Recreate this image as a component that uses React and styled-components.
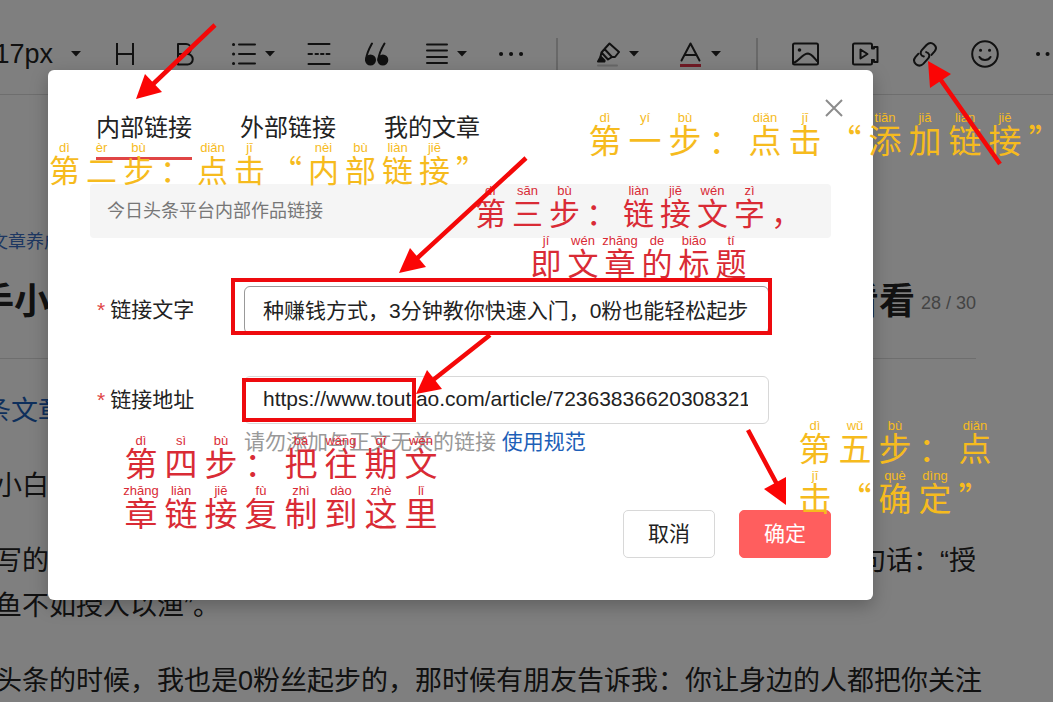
import React, { useState } from 'react';
import styled, { createGlobalStyle } from 'styled-components';

const YELLOW = '#f6bb1e';
const RED = '#d92b35';

const notes = [
  {
    id: 'step1',
    top: 111,
    left: 585,
    color: YELLOW,
    lines: [
      [
        ['第', 'dì'], ['一', 'yí'], ['步', 'bù'], ['：'], ['点', 'diǎn'], ['击', 'jī'],
        ['“'], ['添', 'tiān'], ['加', 'jiā'], ['链', 'liàn'], ['接', 'jiē'], ['”'],
      ],
    ],
  },
  {
    id: 'step2',
    top: 141,
    left: 46,
    color: YELLOW,
    compact: true,
    lines: [
      [
        ['第', 'dì'], ['二', 'èr'], ['步', 'bù'], ['：'], ['点', 'diǎn'], ['击', 'jī'],
        ['“'], ['内', 'nèi'], ['部', 'bù'], ['链', 'liàn'], ['接', 'jiē'], ['”'],
      ],
    ],
  },
  {
    id: 'step3',
    top: 184,
    left: 472,
    color: RED,
    compact: true,
    align: 'center',
    lines: [
      [
        ['第', 'dì'], ['三', 'sān'], ['步', 'bù'], ['：'],
        ['链', 'liàn'], ['接', 'jiē'], ['文', 'wén'], ['字', 'zì'], ['，'],
      ],
      [['即', 'jí'], ['文', 'wén'], ['章', 'zhāng'], ['的', 'de'], ['标', 'biāo'], ['题', 'tí']],
    ],
  },
  {
    id: 'step4',
    top: 434,
    left: 121,
    color: RED,
    lines: [
      [
        ['第', 'dì'], ['四', 'sì'], ['步', 'bù'], ['：'],
        ['把', 'bǎ'], ['往', 'wǎng'], ['期', 'qī'], ['文', 'wén'],
      ],
      [
        ['章', 'zhāng'], ['链', 'liàn'], ['接', 'jiē'], ['复', 'fù'],
        ['制', 'zhì'], ['到', 'dào'], ['这', 'zhè'], ['里', 'lǐ'],
      ],
    ],
  },
  {
    id: 'step5',
    top: 419,
    left: 795,
    color: YELLOW,
    lines: [
      [['第', 'dì'], ['五', 'wǔ'], ['步', 'bù'], ['：'], ['点', 'diǎn']],
      [['击', 'jī'], ['“'], ['确', 'què'], ['定', 'dìng'], ['”']],
    ],
  },
];

const tabs = ['内部链接', '外部链接', '我的文章'];

function Icon({ children, width = 28 }) {
  return (
    <svg
      width={width}
      height="28"
      viewBox={`0 0 ${width} 28`}
      fill="none"
      stroke="currentColor"
      strokeWidth="2"
      strokeLinecap="round"
      strokeLinejoin="round"
      aria-hidden="true"
    >
      {children}
    </svg>
  );
}

function Caret() {
  return (
    <svg width="10" height="6" viewBox="0 0 10 6" aria-hidden="true">
      <path d="M0 0h10L5 5.5z" fill="currentColor" />
    </svg>
  );
}

function Toolbar() {
  return (
    <ToolbarRow>
      <SizeButton type="button">
        17px <Caret />
      </SizeButton>
      <Tool type="button" aria-label="标题">
        <Icon>
          <path d="M6 3v22M22 3v22M6 14h16" strokeLinecap="butt" />
        </Icon>
      </Tool>
      <Tool type="button" aria-label="加粗">
        <Icon>
          <path d="M7 4h8a5 5 0 0 1 0 10H7zM7 14h9.500a5.200 5.200 0 0 1 0 10.500H7z" />
        </Icon>
      </Tool>
      <Tool type="button" aria-label="列表" $width={76}>
        <Icon width={24}>
          <path d="M7 4.500h16M7 14h16M7 23.500h16" />
          <path d="M1.500 4.500h.1M1.500 14h.1M1.500 23.500h.1" strokeWidth="3" />
        </Icon>
        <Caret />
      </Tool>
      <Tool type="button" aria-label="分割线" $width={56}>
        <Icon>
          <path d="M3.500 4h21M3.500 24h21M3.500 14h3.500M10.500 14h2.500M16 14h2.500M21.500 14h3" />
        </Icon>
      </Tool>
      <Tool type="button" aria-label="引用">
        <Icon>
          <circle cx="7.500" cy="20" r="5.500" fill="currentColor" stroke="none" />
          <circle cx="19.800" cy="20" r="5.500" fill="currentColor" stroke="none" />
          <path d="M9 3.500C6.500 8 3.500 13 3 20M21.500 3.500C18.800 8 15.800 13 15.300 20" />
        </Icon>
      </Tool>
      <Tool type="button" aria-label="对齐" $width={76}>
        <Icon width={24}>
          <path d="M3 4.500h20M3 10.500h20M3 17h20M3 23h20" />
        </Icon>
        <Caret />
      </Tool>
      <Tool type="button" aria-label="更多" $width={56}>
        <Icon>
          <path d="M4 14h.1M14 14h.1M24 14h.1" strokeWidth="4" />
        </Icon>
      </Tool>
      <Separator />
      <Tool type="button" aria-label="背景色" $width={84}>
        <Icon width={24}>
          <path d="M13.500 3.500l-5 5.500 7.500 8h3l4-5zM8.500 9l-3 3.500 6.500 7 4-2.500M5.500 12.500l-1 4 4 4" />
          <path d="M2 21.500l2.500-4.500 4 4.500z" fill="currentColor" />
          <path d="M2 25.500h19" stroke="#cfcfcf" />
        </Icon>
        <Caret />
      </Tool>
      <Tool type="button" aria-label="文字颜色" $width={80}>
        <Icon width={24}>
          <path d="M3.500 20.500L12.500 3.500l9 17M7 15h11" />
          <path d="M2 25.500h21" stroke="#e0344a" strokeWidth="3" strokeLinecap="butt" />
        </Icon>
        <Caret />
      </Tool>
      <Separator />
      <Tool type="button" aria-label="图片">
        <Icon>
          <rect x="2" y="3.500" width="25" height="21" rx="1.500" />
          <path d="M3.500 22.500C8.500 20 12 13.500 17 13.500c4 .5 6 4.500 9 7.500" />
          <circle cx="8.500" cy="10" r="1.800" fill="currentColor" stroke="none" />
        </Icon>
      </Tool>
      <Tool type="button" aria-label="视频">
        <Icon>
          <path d="M21 8V5a1.500 1.500 0 0 0-1.500-1.500h-16A1.500 1.500 0 0 0 2 5v18a1.500 1.500 0 0 0 1.500 1.500h16A1.500 1.500 0 0 0 21 23v-3" />
          <path d="M21 8.500h2V7h3.500v15H23v-2h-2" />
          <path d="M9.500 9.500v9l7-4.500z" />
        </Icon>
      </Tool>
      <Tool type="button" aria-label="链接">
        <Icon>
          <path d="M12.800 16.500c-3.300-1-4-3.800-2-6.300l4.700-5.200c2.300-2.300 5.200-2.500 7.500-.6 2.200 1.900 2.500 4.600.6 7l-3.100 3.500" />
          <path d="M15.200 12.100c3.300 1 4 3.800 2 6.300l-4.700 5.200c-2.300 2.300-5.200 2.500-7.500.6-2.200-1.900-2.500-4.600-.6-7l3.100-3.500" />
        </Icon>
      </Tool>
      <Tool type="button" aria-label="表情">
        <Icon>
          <circle cx="14" cy="14" r="12.800" />
          <path d="M8.500 17c2.200 4 8.800 4 11 0" />
          <path d="M9.500 10.200h.1M18.500 10.200h.1" strokeWidth="3" />
        </Icon>
      </Tool>
      <Tool type="button" aria-label="更多插入">
        <Icon>
          <path d="M7 14h.1M16.500 14h.1M26 14h.1" strokeWidth="4" />
        </Icon>
      </Tool>
    </ToolbarRow>
  );
}

function Article() {
  return (
    <ArticleBody>
      <Topic href="#topic" $cut={10}>文章养成</Topic>
      <TitleRow $cut={22}>
        <Title>手小白</Title>
        <TitleEnd>
          <Title as="span">看看</Title>
          <Counter>28 / 30</Counter>
        </TitleEnd>
      </TitleRow>
      <Paragraph $cut={16}>
        <TextLink href="#article">条文章</TextLink>
      </Paragraph>
      <Paragraph $cut={5}>小白</Paragraph>
      <Paragraph $cut={5}>
        <SplitLine>
          <span>写的</span>
          <span>句话：“授</span>
        </SplitLine>
        鱼不如授人以渔”。
      </Paragraph>
      <Paragraph $cut={5}>
        头条的时候，我也是0粉丝起步的，那时候有朋友告诉我：你让身边的人都把你关注
      </Paragraph>
    </ArticleBody>
  );
}

function LinkDialog() {
  const [activeTab, setActiveTab] = useState(tabs[0]);
  const [text, setText] = useState('种赚钱方式，3分钟教你快速入门，0粉也能轻松起步');
  const [url, setUrl] = useState('https://www.toutiao.com/article/7236383662030832190/');

  return (
    <Dialog role="dialog" aria-label="添加链接">
      <CloseButton type="button" aria-label="关闭">
        <svg width="18" height="18" viewBox="0 0 18 18" stroke="currentColor" strokeWidth="2">
          <path d="M1 1l16 16M17 1L1 17" />
        </svg>
      </CloseButton>
      <Tabs>
        {tabs.map(tab => (
          <Tab
            key={tab}
            type="button"
            className={activeTab === tab ? 'selected' : ''}
            onClick={() => setActiveTab(tab)}
          >
            {tab}
          </Tab>
        ))}
      </Tabs>
      <Notice>今日头条平台内部作品链接</Notice>
      <Field $gap={48}>
        <Label htmlFor="link-text">链接文字</Label>
        <Input
          id="link-text"
          $focused
          value={text}
          onChange={e => setText(e.target.value)}
        />
      </Field>
      <Field $gap={42}>
        <Label htmlFor="link-url">链接地址</Label>
        <Input id="link-url" value={url} onChange={e => setUrl(e.target.value)} />
      </Field>
      <Hint>
        请勿添加与正文无关的链接 <TextLink href="#rules">使用规范</TextLink>
      </Hint>
      <Footer>
        <Button type="button">取消</Button>
        <Button type="button" $primary>确定</Button>
      </Footer>
    </Dialog>
  );
}

function Note({ note }) {
  return (
    <NoteBox $top={note.top} $left={note.left} $color={note.color} $align={note.align}>
      {note.lines.map((line, i) => (
        <NoteLine key={i}>
          {line.map(([char, pinyin], j) => (
            <NoteCell key={j} $compact={note.compact}>
              <Pinyin>{pinyin}</Pinyin>
              <span>{char}</span>
            </NoteCell>
          ))}
        </NoteLine>
      ))}
    </NoteBox>
  );
}

function Arrows() {
  return (
    <ArrowCanvas width="1053" height="702" viewBox="0 0 1053 702" aria-hidden="true">
      <g stroke="#f40808" strokeWidth="4.500">
        <path d="M215 25L150 87M526 158L412 263M490 335L428 384M748 430L779 488M1000 164L938 76" />
      </g>
      <g fill="#fb0505">
        <path d="M136 99l9-25 17 18z" />
        <path d="M399 273l11-25 16 19z" />
        <path d="M416 394l11-24 15 19z" />
        <path d="M786 505l-22-16 22-12z" />
        <path d="M928 61l23 13-21 14z" />
      </g>
    </ArrowCanvas>
  );
}

export default function App() {
  return (
    <>
      <GlobalStyle />
      <Page>
        <Toolbar />
        <Article />
        <Overlay>
          <LinkDialog />
        </Overlay>
        <Annotations>
          {notes.map(note => (
            <Note key={note.id} note={note} />
          ))}
          <Frame $top={278} $left={231} $width={541} $height={57} />
          <Frame $top={378} $left={242} $width={174} $height={44} />
          <Arrows />
        </Annotations>
      </Page>
    </>
  );
}

const GlobalStyle = createGlobalStyle`
  * {
    box-sizing: border-box;
  }
  body {
    margin: 0;
    background: #fff;
    color: #222;
    font-family: 'Liberation Sans', 'Noto Sans CJK SC', sans-serif;
    overflow: hidden;
  }
  button, input {
    font-family: inherit;
    color: inherit;
  }
  a {
    text-decoration: none;
  }
`;

const Page = styled.div`
  position: relative;
  min-height: 100vh;
  overflow: hidden;
`;

const ToolbarRow = styled.div`
  display: flex;
  align-items: center;
  height: 95px;
  padding-top: 14px;
  border-bottom: 1px solid #dcdcdc;
`;

const Tool = styled.button`
  display: flex;
  flex: none;
  align-items: center;
  justify-content: center;
  gap: 9px;
  width: ${({ $width }) => $width || 60}px;
  height: 40px;
  padding: 0;
  border: 0;
  background: none;
  svg {
    flex: none;
  }
`;

const SizeButton = styled(Tool)`
  justify-content: flex-end;
  gap: 18px;
  width: 95px;
  padding-right: 14px;
  font-size: 27px;
`;

const Separator = styled.i`
  flex: none;
  width: 2px;
  height: 32px;
  margin: 0 17px;
  background: #d0d0d0;
`;

const ArticleBody = styled.main`
  display: flex;
  flex-direction: column;
  gap: 30px;
  padding: 132px 77px 0 0;
`;

const Topic = styled.a`
  margin-left: -${({ $cut }) => $cut}px;
  color: #3a6fc4;
  font-size: 18px;
  line-height: 30px;
`;

const TextLink = styled.a`
  color: #1d5fb8;
`;

const TitleRow = styled.div`
  display: flex;
  justify-content: space-between;
  align-items: center;
  height: 102px;
  margin: -30px 0 0 -${({ $cut }) => $cut}px;
  padding-bottom: 12px;
  border-bottom: 1px solid #dcdcdc;
`;

const Title = styled.h1`
  margin: 0;
  font-size: 36px;
  font-weight: 700;
  line-height: 48px;
`;

const TitleEnd = styled.div`
  display: flex;
  align-items: center;
  gap: 6px;
`;

const Counter = styled.span`
  padding-top: 4px;
  color: #888;
  font-size: 18px;
`;

const Paragraph = styled.p`
  margin: 0 0 0 -${({ $cut }) => $cut}px;
  font-size: 27px;
  line-height: 45px;
  white-space: nowrap;
`;

const SplitLine = styled.span`
  display: flex;
  justify-content: space-between;
`;

const Overlay = styled.div`
  position: absolute;
  inset: 0;
  padding: 70px 180px 0 48px;
  background: rgba(0, 0, 0, 0.5);
`;

const Dialog = styled.section`
  position: relative;
  padding: 42px;
  border-radius: 6px;
  background: #fff;
  box-shadow: 0 6px 18px rgba(0, 0, 0, 0.25);
`;

const CloseButton = styled.button`
  position: absolute;
  top: 29px;
  right: 30px;
  display: flex;
  padding: 0;
  border: 0;
  background: none;
  color: #8c8c8c;
`;

const Tabs = styled.nav`
  display: flex;
  gap: 48px;
  padding-left: 6px;
`;

const Tab = styled.button`
  padding: 0 0 13px;
  border: 0;
  border-bottom: 3px solid transparent;
  background: none;
  font-size: 24px;
  line-height: 32px;
  &.selected {
    border-color: #e04545;
  }
`;

const Notice = styled.div`
  margin-top: 24px;
  padding: 0 17px;
  border-radius: 4px;
  background: #f5f5f5;
  color: #777;
  font-size: 18px;
  line-height: 54px;
`;

const Field = styled.div`
  display: flex;
  align-items: center;
  margin-top: ${({ $gap }) => $gap}px;
  padding-right: 62px;
`;

const Label = styled.label`
  flex: none;
  width: 154px;
  padding: 0 0 4px 7px;
  font-size: 21px;
  &::before {
    content: '*';
    margin-right: 5px;
    color: #e04545;
  }
`;

const Input = styled.input`
  flex: 1;
  min-width: 0;
  height: 48px;
  padding: 0 20px 2px 18px;
  border: 1px solid ${({ $focused }) => ($focused ? '#999' : '#d8d8d8')};
  border-radius: 6px;
  background: #fff;
  font-size: 21px;
  outline: 0;
`;

const Hint = styled.p`
  margin: 2px 0 0;
  padding-left: 154px;
  color: #999;
  font-size: 21px;
  line-height: 32px;
`;

const Footer = styled.footer`
  display: flex;
  justify-content: flex-end;
  gap: 24px;
  margin-top: 52px;
`;

const Button = styled.button`
  width: 92px;
  height: 48px;
  padding: 0 0 5px;
  border: 1px solid ${({ $primary }) => ($primary ? '#ff5e5e' : '#d8d8d8')};
  border-radius: 5px;
  background: ${({ $primary }) => ($primary ? '#ff5e5e' : '#fff')};
  color: ${({ $primary }) => ($primary ? '#fff' : '#222')};
  font-size: 21px;
`;

const Annotations = styled.div`
  position: absolute;
  inset: 0;
  pointer-events: none;
`;

const NoteBox = styled.div`
  position: absolute;
  top: ${({ $top }) => $top}px;
  left: ${({ $left }) => $left}px;
  display: flex;
  flex-direction: column;
  align-items: ${({ $align }) => $align || 'flex-start'};
  gap: 6px;
  color: ${({ $color }) => $color};
`;

const NoteLine = styled.div`
  display: flex;
`;

const NoteCell = styled.span`
  display: flex;
  flex-direction: column;
  align-items: center;
  width: ${({ $compact }) => ($compact ? 37 : 40)}px;
  font-family: 'Noto Sans CJK SC', sans-serif;
  font-size: ${({ $compact }) => ($compact ? 31 : 33)}px;
  line-height: 32px;
`;

const Pinyin = styled.span`
  height: 12px;
  font-family: 'Liberation Sans', sans-serif;
  font-size: 13px;
  line-height: 14px;
`;

const Frame = styled.div`
  position: absolute;
  top: ${({ $top }) => $top}px;
  left: ${({ $left }) => $left}px;
  width: ${({ $width }) => $width}px;
  height: ${({ $height }) => $height}px;
  border: 4px solid #ee0a0e;
`;

const ArrowCanvas = styled.svg`
  position: absolute;
  top: 0;
  left: 0;
`;
